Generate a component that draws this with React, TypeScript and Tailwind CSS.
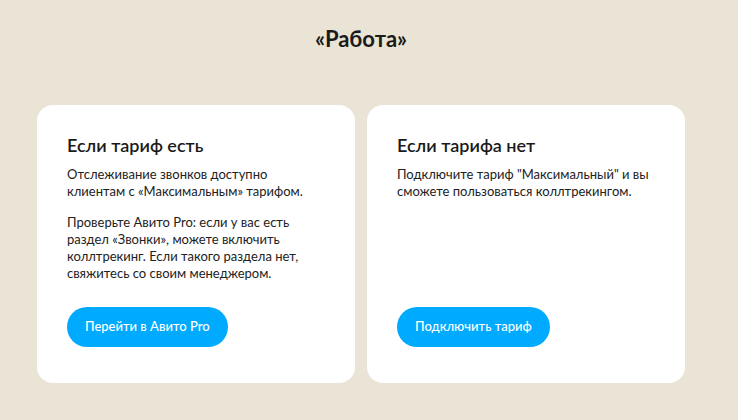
export default function App() {
  return (
    <div className="min-h-[420px] w-[738px] bg-[#eae4d6] pl-[37px] pt-[27px] font-['Lato',sans-serif] text-[#1a1a1a]">
      <div className="w-[648px]">
        <h1 className="text-center text-[22px] font-bold leading-6">«Работа»</h1>
        <div className="mt-[54px] grid grid-cols-2 gap-3">
          <Card
            title="Если тариф есть"
            paragraphs={[
              "Отслеживание звонков доступно клиентам с «Максимальным» тарифом.",
              "Проверьте Авито Pro: если у вас есть раздел «Звонки», можете включить коллтрекинг. Если такого раздела нет, свяжитесь со своим менеджером.",
            ]}
            action="Перейти в Авито Pro"
          />
          <Card
            title="Если тарифа нет"
            paragraphs={[
              'Подключите тариф "Максимальный" и вы сможете пользоваться коллтрекингом.',
            ]}
            action="Подключить тариф"
          />
        </div>
      </div>
    </div>
  );
}

function Card({
  title,
  paragraphs,
  action,
}: {
  title: string;
  paragraphs: string[];
  action: string;
}) {
  return (
    <div className="flex h-[278px] flex-col rounded-2xl bg-white px-[30px] pt-[28px] pb-[36px]">
      <h2 className="text-[18px] font-semibold leading-6">{title}</h2>
      <div className="mt-[9px] space-y-[14px]">
        {paragraphs.map((p) => (
          <p key={p} className="text-[13px] leading-[17px] text-[#222]">
            {p}
          </p>
        ))}
      </div>
      <div className="mt-auto">
        <button className="h-10 rounded-full bg-[#00aaff] px-[18px] text-[13px] font-medium text-white">
          {action}
        </button>
      </div>
    </div>
  );
}
